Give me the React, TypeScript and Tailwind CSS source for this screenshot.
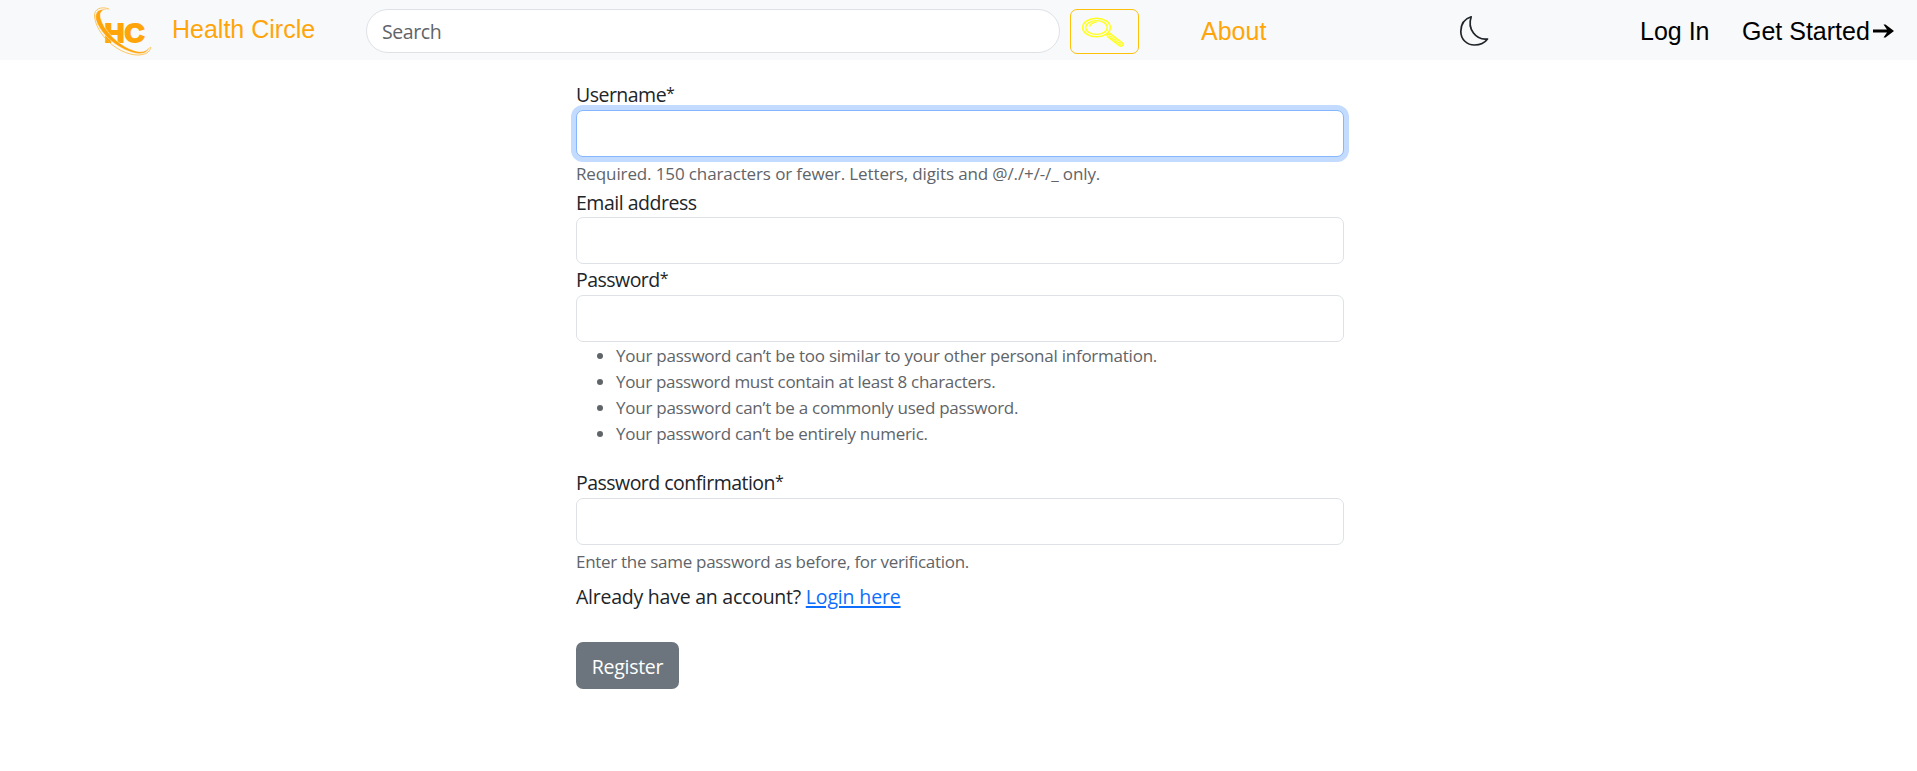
import type { ReactNode } from "react";

const sans = "font-['Open_Sans','Noto_Sans',sans-serif]";
const arial = "font-['Liberation_Sans',Arial,sans-serif]";

function Logo() {
  return (
    <svg className="h-[50px] w-[60px] shrink-0" viewBox="0 0 60 50" aria-label="HC">
      <text
        x="11.500"
        y="34.800"
        fontFamily="Liberation Sans, Arial, sans-serif"
        fontWeight="700"
        fontSize="26"
        textLength="40"
        lengthAdjust="spacingAndGlyphs"
        fill="#ffa50a"
        stroke="#ffa50a"
        strokeWidth="1.800"
      >
        HC
      </text>
      <path
        d="M18 3.500C8 1 5 6 9 15C14 28 31 42 45 44.500C51 45.500 55 43 57 39C56 45 50 47.500 44 46.500C28 44 8 29 3 13C1 4 7 0 18 3.500Z"
        fill="#ffa50a"
        stroke="#f8f9fa"
        strokeWidth=".5"
      />
      <path d="M16 2C8 -1 1 2 1.500 9C3 27 24 47 44 48C53 48 57 45 57.800 40" fill="none" stroke="#ffb838" strokeWidth=".8" />
    </svg>
  );
}

function Magnifier() {
  return (
    <svg className="h-[30px] w-[43px]" viewBox="0 0 43 30" fill="none" stroke="#ffff21">
      <ellipse cx="15.500" cy="10.500" rx="13.800" ry="9.300" strokeWidth="1.600" />
      <ellipse cx="15.500" cy="10.500" rx="10.800" ry="6.900" strokeWidth="1.400" />
      <path d="M8.500 10C9 7 11.500 5.500 15.500 5" strokeWidth="1.300" />
      <path d="M26 18L29 16.500L42 26.500C43 28 41 29.500 39 29L27 20Z" strokeWidth="1.600" />
      <path d="M28 18.500L40 27.500" strokeWidth="1.200" />
    </svg>
  );
}

function Label({ children, required = false }: { children: ReactNode; required?: boolean }) {
  return (
    <label
      className={
        required
          ? "block h-[30px] text-[19.500px] leading-[30px] tracking-[-0.52px] text-[#212529]"
          : "block h-[30px] pt-px text-[19.500px] leading-[29px] tracking-[-0.48px] text-[#212529]"
      }
    >
      {children}
      {required && <span className="align-[3px] text-[16px] leading-none">*</span>}
    </label>
  );
}

function Field({ focused = false, type = "text" }: { focused?: boolean; type?: string }) {
  return (
    <input
      type={type}
      className={
        focused
          ? "block h-[47px] w-full rounded-[7px] border border-[#86b7fe] bg-white px-4 shadow-[0_0_0_5px_#c2dbff] outline-none"
          : "block h-[47px] w-full rounded-[7px] border border-[#dee2e6] bg-white px-4 outline-none"
      }
    />
  );
}

function Help({ children, tracking = "tracking-[-0.3px]" }: { children: ReactNode; tracking?: string }) {
  return <p className={`mt-1 h-[26px] text-[17px] leading-[26px] text-[#5f6468] ${tracking}`}>{children}</p>;
}

const rules = [
  { text: "Your password can’t be too similar to your other personal information.", tracking: "tracking-[-0.24px]" },
  { text: "Your password must contain at least 8 characters.", tracking: "tracking-[-0.31px]" },
  { text: "Your password can’t be a commonly used password.", tracking: "tracking-[-0.25px]" },
  { text: "Your password can’t be entirely numeric.", tracking: "tracking-[-0.27px]" },
];

export default function App() {
  return (
    <div className={`min-h-[771px] bg-white ${sans}`}>
      <header className={`flex h-[60px] items-start bg-[#f8f9fa] text-[25px] leading-[30px] ${arial}`}>
        <a className="ml-[93px] mt-[7px] block">
          <Logo />
        </a>
        <a className="ml-[19px] mt-[14px] w-[194px] whitespace-nowrap text-[#ffa50a]">Health Circle</a>
        <input
          placeholder="Search"
          className={`mt-[9px] h-[44px] w-[694px] rounded-full border border-[#dee2e6] bg-white px-[15px] text-[19.500px] tracking-[-0.4px] outline-none placeholder:text-[#5f6468] ${sans}`}
        />
        <button className="ml-[10px] mt-[9px] flex h-[45px] w-[69px] items-start rounded-[7px] border border-[#ffc107] pl-[10px] pt-[7px]">
          <Magnifier />
        </button>
        <a className="ml-[62px] mt-[16px] w-[258px] text-[#ffa50a]">About</a>
        <svg className="mt-[15px] h-[32px] w-[30px]" viewBox="0 0 30 32" fill="none" stroke="#212529" strokeWidth="1.700" strokeLinejoin="round">
          <path d="M12.200 1.800C5 4 1.800 10 1.800 16.500C1.800 24.500 8 30 15.500 30C21.500 30 26 27.500 28.500 24C17 25.500 8 14 12.200 1.800Z" />
        </svg>
        <a className="ml-[151px] mt-[16px] w-[102px] whitespace-nowrap text-black">Log In</a>
        <a className="mt-[16px] flex whitespace-nowrap text-black">
          Get Started
          <svg className="ml-[3px] mt-[7px] h-[16px] w-[22px]" viewBox="0 0 22 16">
            <path d="M0 6.600H14L10.500 1.500H12.500L21 8L12.500 14.500H10.500L14 9.400H0Z" fill="#000" />
          </svg>
        </a>
      </header>

      <form className="ml-[576px] flex w-[768px] flex-col pt-[20px]">
        <Label required>Username</Label>
        <Field focused />
        <Help tracking="tracking-[-0.12px]">Required. 150 characters or fewer. Letters, digits and @/./+/-/_ only.</Help>
        <Label>Email address</Label>
        <Field type="email" />
        <div className="mt-px">
          <Label required>Password</Label>
        </div>
        <Field type="password" />
        <ul className="h-[126px] list-none pt-[0.500px] text-[17px] leading-[26.250px] text-[#5f6468]">
          {rules.map((rule) => (
            <li key={rule.text} className={`flex items-center pl-[21px] ${rule.tracking}`}>
              <span className="mr-[13px] size-[6px] rounded-full bg-[#5f6468]" />
              {rule.text}
            </li>
          ))}
        </ul>
        <Label required>Password confirmation</Label>
        <Field type="password" />
        <Help>Enter the same password as before, for verification.</Help>
        <p className="mt-[7px] h-[30px] text-[19.500px] leading-[30px] tracking-[-0.24px] text-[#212529]">
          Already have an account?{" "}
          <a className="tracking-[-0.15px] text-[#0d6efd] underline decoration-2 underline-offset-2">Login here</a>
        </p>
        <button
          type="button"
          className="mt-[30px] h-[47px] w-[103px] rounded-[7px] bg-[#6c757d] pt-[3px] text-[19.500px] tracking-[-0.3px] text-white"
        >
          Register
        </button>
      </form>
    </div>
  );
}
